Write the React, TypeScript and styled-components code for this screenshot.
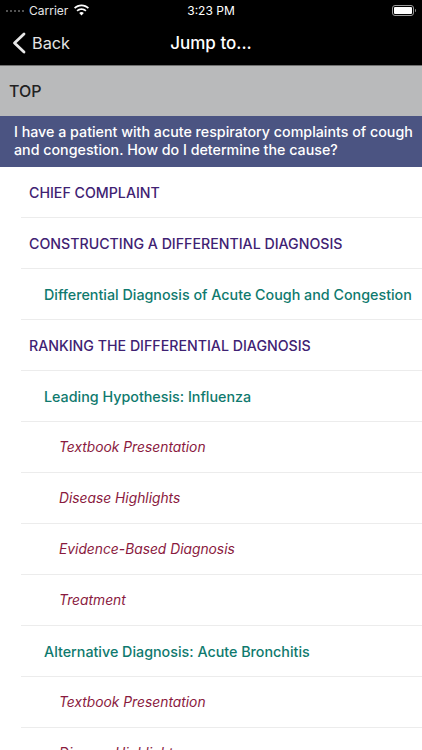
import React from 'react';
import styled, {createGlobalStyle} from 'styled-components';

const OUTLINE = [
    {level: 1, label: 'CHIEF COMPLAINT'},
    {level: 1, label: 'CONSTRUCTING A DIFFERENTIAL DIAGNOSIS'},
    {level: 2, label: 'Differential Diagnosis of Acute Cough and Congestion'},
    {level: 1, label: 'RANKING THE DIFFERENTIAL DIAGNOSIS'},
    {level: 2, label: 'Leading Hypothesis: Influenza'},
    {level: 3, label: 'Textbook Presentation'},
    {level: 3, label: 'Disease Highlights'},
    {level: 3, label: 'Evidence-Based Diagnosis'},
    {level: 3, label: 'Treatment'},
    {level: 2, label: 'Alternative Diagnosis: Acute Bronchitis'},
    {level: 3, label: 'Textbook Presentation'},
    {level: 3, label: 'Disease Highlights'},
];

const WifiIcon = () => (
    <svg width="17" height="12" viewBox="0 0 17 12" fill="#fff">
        <path d="M8.5 2.3c2.4 0 4.6.9 6.3 2.5l1.2-1.3C14 1.6 11.4.5 8.5.5S3 1.6 1 3.500l1.2 1.3c1.7-1.6 3.9-2.500 6.300-2.500z" />
        <path d="M8.500 6c1.400 0 2.700.5 3.700 1.500l1.300-1.300C12.100 4.900 10.400 4.200 8.500 4.200s-3.600.7-5 2l1.300 1.300C5.800 6.500 7.100 6 8.500 6z" />
        <path d="M8.500 8c-.9 0-1.700.3-2.300.9l2.300 2.500 2.300-2.500C10.200 8.300 9.400 8 8.500 8z" />
    </svg>
);

const BackChevron = () => (
    <svg width="14" height="22" viewBox="0 0 14 22" fill="none" stroke="#e8e8e8" strokeWidth="2.8" strokeLinecap="round" strokeLinejoin="round">
        <polyline points="12,2 2.500,11 12,20" />
    </svg>
);

const App = () => {
    return (
        <>
            <GlobalStyle />
            <Screen>
                <StatusBar>
                    <StatusLeft>
                        <Dots>
                            <Dot /><Dot /><Dot /><Dot /><Dot />
                        </Dots>
                        <StatusText>Carrier</StatusText>
                        <WifiIcon />
                    </StatusLeft>
                    <StatusTime>3:23 PM</StatusTime>
                    <Battery>
                        <BatteryFill />
                    </Battery>
                </StatusBar>
                <NavBar>
                    <BackLink>
                        <BackChevron />
                        <span>Back</span>
                    </BackLink>
                    <NavTitle>Jump to...</NavTitle>
                </NavBar>
                <TopRow>TOP</TopRow>
                <Question>
                    I have a patient with acute respiratory complaints of cough and congestion. How do I determine the cause?
                </Question>
                <List>
                    {OUTLINE.map((item, index) => (
                        <Row key={index}>
                            <RowLabel $level={item.level}>{item.label}</RowLabel>
                        </Row>
                    ))}
                </List>
            </Screen>
        </>
    );
};

export default App;

const GlobalStyle = createGlobalStyle`
  html, body {
    margin: 0;
    padding: 0;
    background: #fff;
  }
  body {
    font-family: Inter, "Noto Sans", "Liberation Sans", sans-serif;
  }
`;

const Screen = styled.div`
  width: 422px;
  height: 750px;
  overflow: hidden;
  background: #fff;
`;

const StatusBar = styled.div`
  height: 20px;
  display: grid;
  grid-template-columns: 1fr auto 1fr;
  align-items: center;
  background: #000;
  color: #fff;
  padding: 0 8px 0 6px;
`;

const StatusLeft = styled.div`
  display: flex;
  align-items: center;
  gap: 5px;
`;

const Dots = styled.div`
  display: flex;
  align-items: flex-end;
  gap: 2px;
  height: 4px;
`;

const Dot = styled.div`
  width: 2px;
  height: 2px;
  border-radius: 50%;
  background: #6e6e6e;
`;

const StatusText = styled.span`
  font-size: 12px;
  color: #e6e6e6;
`;

const StatusTime = styled.span`
  font-size: 12px;
  font-weight: 400;
  margin-left: 2px;
`;

const Battery = styled.div`
  justify-self: end;
  position: relative;
  width: 22px;
  height: 11px;
  box-sizing: border-box;
  border: 1px solid #9a9a9a;
  border-radius: 3px;
  padding: 1px;

  &::after {
    content: '';
    position: absolute;
    right: -3px;
    top: 3px;
    width: 1.5px;
    height: 3px;
    background: #8a8a8a;
    border-radius: 0 1px 1px 0;
  }
`;

const BatteryFill = styled.div`
  width: 100%;
  height: 100%;
  background: #fff;
  border-radius: 1px;
`;

const NavBar = styled.div`
  height: 46px;
  box-sizing: border-box;
  display: flex;
  align-items: center;
  justify-content: center;
  position: relative;
  background: #000;
  color: #fff;
  border-bottom: 1px solid #6f6f6f;
`;

const BackLink = styled.div`
  position: absolute;
  left: 12px;
  top: 12px;
  display: flex;
  align-items: center;
  gap: 6px;
  font-size: 16.3px;
  color: #e4e4e4;
`;

const NavTitle = styled.div`
  font-size: 17px;
  font-weight: 500;
`;

const TopRow = styled.div`
  height: 50px;
  display: flex;
  align-items: center;
  padding-left: 9px;
  background: #b9babb;
  color: #222;
  font-size: 16px;
  font-weight: 500;
`;

const Question = styled.div`
  height: 51px;
  box-sizing: border-box;
  padding: 7px 6px 0 14px;
  background: #4b5482;
  color: #fff;
  font-size: 14.25px;
  line-height: 18px;
  font-weight: 500;
`;

const List = styled.div`
  padding-left: 21px;
`;

const Row = styled.div`
  height: 51px;
  box-sizing: border-box;
  display: flex;
  align-items: center;
  border-bottom: 1px solid #ececec;
  white-space: nowrap;
`;

const RowLabel = styled.span<{$level: number}>`
  font-size: ${p => (p.$level === 1 ? 14.2 : p.$level === 2 ? 14.3 : 13.8)}px;
  font-weight: ${p => (p.$level === 3 ? 400 : 500)};
  font-style: ${p => (p.$level === 3 ? 'italic' : 'normal')};
  color: ${p => (p.$level === 1 ? '#3f2273' : p.$level === 2 ? '#0f7a6e' : '#8a1a3e')};
  margin-left: ${p => (p.$level === 1 ? 8 : p.$level === 2 ? 23 : 38)}px;
`;
